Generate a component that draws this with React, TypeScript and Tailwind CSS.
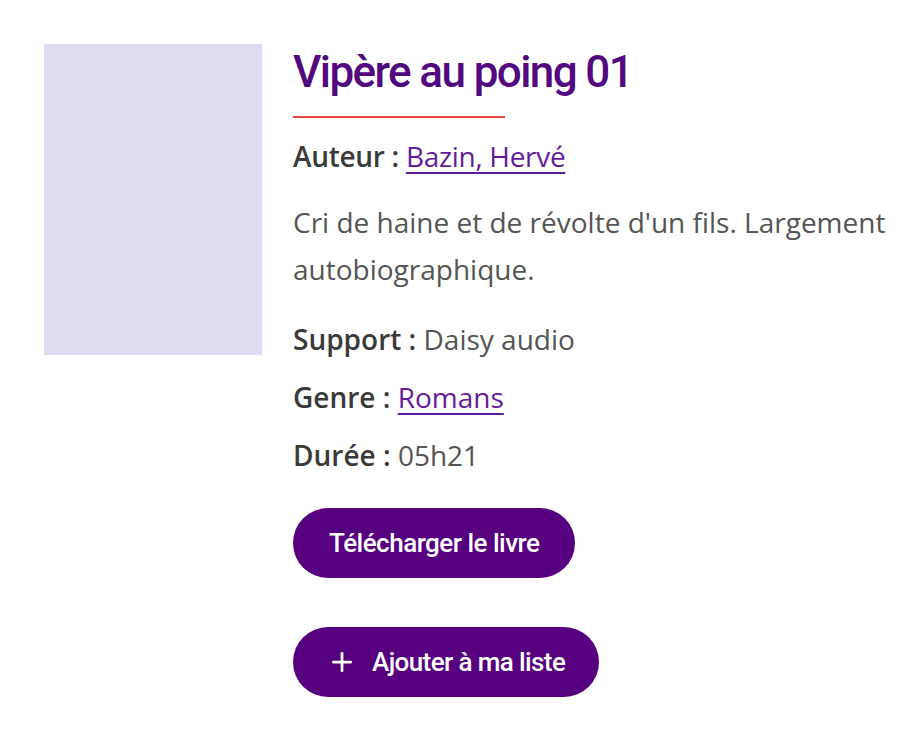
import { Plus } from 'lucide-react';

const Row = ({
  label,
  children,
  className,
}: {
  label: string;
  children: React.ReactNode;
  className: string;
}) => (
  <p className={`leading-[36px] ${className}`}>
    <span className="font-semibold text-[#3a3a3a]">{label} : </span>
    {children}
  </p>
);

const App = () => {
  return (
    <div className="min-h-[731px] w-[908px] bg-white">
      <div
        className="flex gap-[31px] pl-[44px] pt-[44px]"
        style={{ fontFamily: '"Open Sans", sans-serif' }}
      >
        <div className="h-[311px] w-[218px] shrink-0 bg-[#dfdcf0]" />
        <div className="pt-[2px] text-[28px] text-[#555555]">
          <h1
            style={{ fontFamily: 'Roboto, sans-serif' }}
            className="text-[44px] leading-[52px] font-medium tracking-[-1.6px] text-[#52087f]"
          >
            Vipère au poing 01
          </h1>
          <div className="mt-[18px] h-[2px] w-[212px] bg-[#e8453c]" />
          <Row label="Auteur" className="mt-[20px] tracking-[-0.3px]">
            <a href="#" className="text-[#641c9a] underline underline-offset-[5px]">
              Bazin, Hervé
            </a>
          </Row>
          <p className="mt-[25px] leading-[47px]">
            Cri de haine et de révolte d'un fils. Largement autobiographique.
          </p>
          <Row label="Support" className="mt-[28px]">Daisy audio</Row>
          <Row label="Genre" className="mt-[22px]">
            <a href="#" className="text-[#641c9a] underline underline-offset-[5px]">
              Romans
            </a>
          </Row>
          <Row label="Durée" className="mt-[22px]">05h21</Row>
          <div
            className="mt-[35px] flex flex-col items-start gap-[49px]"
            style={{ fontFamily: 'Roboto, sans-serif' }}
          >
            <button className="h-[70px] rounded-full bg-[#56007f] px-[36px] text-[26px] font-medium tracking-[-0.5px] text-white">
              Télécharger le livre
            </button>
            <button className="flex h-[70px] items-center gap-[15px] rounded-full bg-[#56007f] pl-[34px] pr-[34px] text-[26px] font-medium tracking-[-0.6px] text-white">
              <Plus size={30} strokeWidth={2.2} />
              Ajouter à ma liste
            </button>
          </div>
        </div>
      </div>
    </div>
  );
};

export default App;
